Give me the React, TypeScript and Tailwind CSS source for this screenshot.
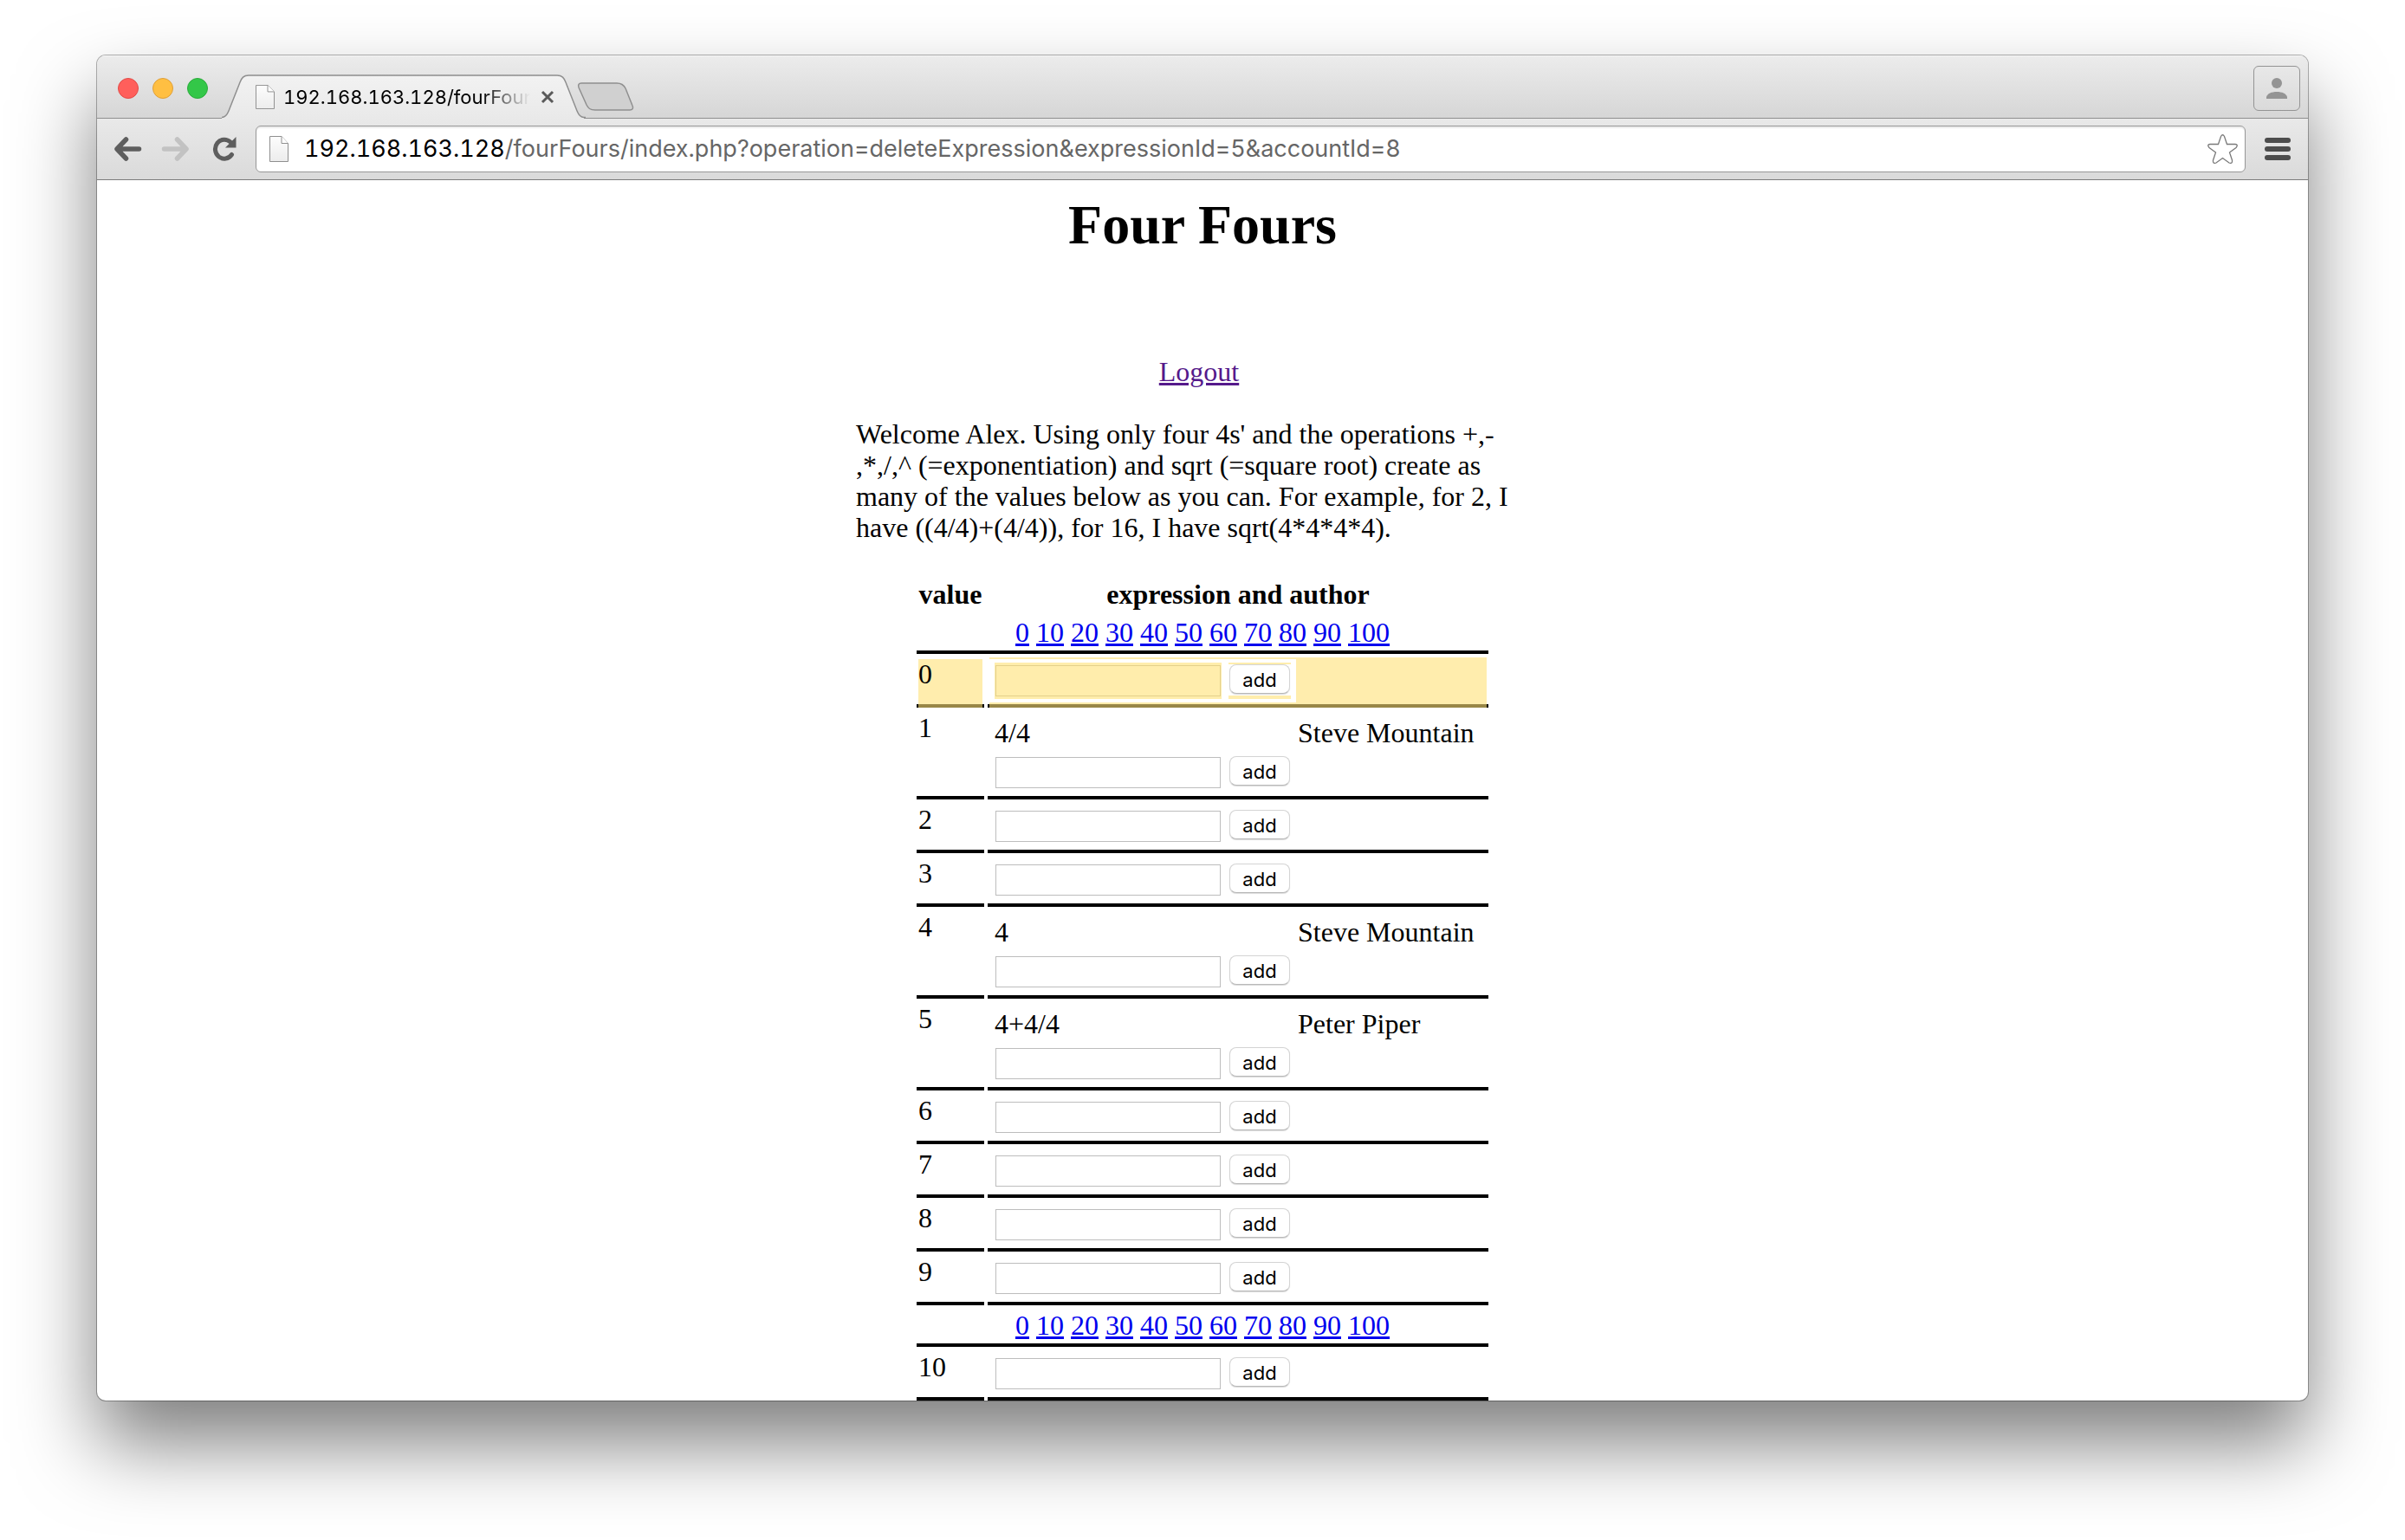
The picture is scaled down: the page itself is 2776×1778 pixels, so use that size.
import React from "react";

type Row = { value: number; expression?: string; author?: string; flash?: boolean };

const firstRows: Row[] = [
  { value: 0, flash: true },
  { value: 1, expression: "4/4", author: "Steve Mountain" },
  { value: 2 },
  { value: 3 },
  { value: 4, expression: "4", author: "Steve Mountain" },
  { value: 5, expression: "4+4/4", author: "Peter Piper" },
  { value: 6 },
  { value: 7 },
  { value: 8 },
  { value: 9 },
];
const nextRows: Row[] = [{ value: 10 }];
const jumps = [0, 10, 20, 30, 40, 50, 60, 70, 80, 90, 100];

function PageIcon({ className }: { className: string }) {
  return (
    <svg viewBox="0 0 22 30" preserveAspectRatio="none" className={className} aria-hidden="true">
      <defs>
        <linearGradient id="sheet" x1="0" y1="0" x2="0" y2="1">
          <stop offset="0" stopColor="#fdfdfd" />
          <stop offset="1" stopColor="#ececec" />
        </linearGradient>
      </defs>
      <path d="M.5.5H14L21.500 8.500V29.500H.5Z" fill="url(#sheet)" stroke="#8f8f8f" />
      <path d="M14 .5V8.500H21.500" fill="#fff" stroke="#8f8f8f" />
    </svg>
  );
}

function JumpRow() {
  return (
    <tr>
      <td colSpan={2} className="border-b-4 border-black px-[2px] pt-px pb-[3px] text-center">
        <nav className="flex justify-center gap-2">
          {jumps.map((n) => (
            <a key={n} href={`#v${n}`} className="text-[#0000ee] underline">
              {n}
            </a>
          ))}
        </nav>
      </td>
    </tr>
  );
}

function ValueRow({ value, expression, author, flash }: Row) {
  return (
    <tr id={`v${value}`}>
      <td className="relative border-b-4 border-black px-[2px] pt-px pb-[3px] align-top">
        {flash && <span className="absolute inset-x-[2px] top-[2px] -bottom-1 bg-[rgba(255,225,118,0.6)]" />}
        <span className="relative">{value}</span>
      </td>
      <td className="relative border-b-4 border-black p-[2px] align-top">
        {flash && <span className="absolute inset-x-[2px] top-0 -bottom-1 bg-[rgba(255,225,118,0.6)]" />}
        {expression && (
          <div className="flex pt-[5px] pb-[3px]">
            <span className="w-[356px] pl-[6px]">{expression}</span>
            <span>{author}</span>
          </div>
        )}
        <form
          onSubmit={(e) => e.preventDefault()}
          className="relative flex w-[354px] gap-2 bg-white px-[6px] py-1"
        >
          <span className={flash ? "flex bg-[#ffedac] px-px py-[3px]" : "flex px-px py-[3px]"}>
            <input
              type="text"
              aria-label={`Expression for ${value}`}
              className={
                flash
                  ? "h-9 w-[260px] border border-[#e3d08c] bg-transparent px-1 outline-none"
                  : "h-9 w-[260px] border border-[#bdbdbd] bg-white px-1 outline-none"
              }
            />
          </span>
          <span
            className={
              flash
                ? "h-[42px] border-t-2 border-b-4 border-[#ffedac] px-px"
                : "h-[42px] border-t-2 border-b-4 border-transparent px-px"
            }
          >
            <button
              type="submit"
              className="block h-[34px] w-[70px] rounded-[8px] border border-[#d4d4d4] border-b-[#b8b8b8] bg-white text-center font-['Inter',sans-serif] text-[22px] leading-[34px] shadow-[0_1px_1px_rgba(0,0,0,0.15)]"
            >
              add
            </button>
          </span>
        </form>
      </td>
    </tr>
  );
}

function TabStrip() {
  return (
    <div className="flex h-[73px] items-end border-b border-[#8f8f8f] bg-linear-to-b from-[#ececec] to-[#d6d6d6] shadow-[inset_0_1px_0_#f6f6f6]">
      <div className="flex h-full w-36 items-center gap-4 pt-1 pl-6">
        <button aria-label="Close window" className="size-6 rounded-full border border-[#e24b47] bg-[#ff5f5b]" />
        <button aria-label="Minimize window" className="size-6 rounded-full border border-[#df9f38] bg-[#ffbf42]" />
        <button aria-label="Zoom window" className="size-6 rounded-full border border-[#2bab3b] bg-[#33c748]" />
      </div>
      <div className="relative -mb-px flex h-[51px] w-[420px] items-center pl-[39px]">
        <svg viewBox="0 0 420 51" className="absolute inset-0 size-full" aria-hidden="true">
          <defs>
            <linearGradient id="tab" x1="0" y1="0" x2="0" y2="1">
              <stop offset="0" stopColor="#f2f2f2" />
              <stop offset="1" stopColor="#e9e9e9" />
            </linearGradient>
          </defs>
          <path
            d="M0 51V50C4 50 6 47 8 42L21 9C23 4 25 1.500 31 1.500H387C393 1.500 395 4 397 9L410 42C412 47 414 50 418 50V51Z"
            fill="url(#tab)"
          />
          <path
            d="M0 49.500C4 49.500 6 47 8 42L21 9C23 4 25 1 31 1H387C393 1 395 4 397 9L410 42C412 47 414 49.500 418 49.500H420"
            fill="none"
            stroke="#8f8f8f"
            strokeWidth="1.500"
          />
        </svg>
        <PageIcon className="relative h-7 w-[22px]" />
        <span className="relative ml-[10px] w-[285px] overflow-hidden whitespace-nowrap font-['Inter',sans-serif] text-[22px] leading-7 tabular-nums text-black [mask-image:linear-gradient(to_right,black_80%,transparent)]">
          192.168.163.128/fourFours
        </span>
        <button aria-label="Close tab" className="relative ml-3">
          <svg viewBox="0 0 16 16" className="size-4" aria-hidden="true">
            <path d="M2 2 14 14M14 2 2 14" stroke="#5a5a5a" strokeWidth="3" />
          </svg>
        </button>
      </div>
      <button aria-label="New tab" className="mb-2 -ml-[10px]">
        <svg viewBox="0 0 66 33" className="h-[33px] w-[66px]" aria-hidden="true">
          <path
            d="M5 1H46C51 1 54 3 56 7L64 27C65.500 30 64 32 61 32H21C15 32 13 30 11 26L2 6C1 3 2 1 5 1Z"
            fill="#d0d0d0"
            stroke="#8f8f8f"
            strokeWidth="1.500"
          />
        </svg>
      </button>
      <button
        aria-label="Profile"
        className="mr-[9px] mb-2 ml-auto flex h-[52px] w-[54px] items-center justify-center rounded-[6px] border border-[#949494] bg-linear-to-b from-[#e8e8e8] to-[#dadada]"
      >
        <svg viewBox="0 0 24 24" className="size-6" aria-hidden="true">
          <circle cx="12" cy="6" r="6" fill="#949494" />
          <path d="M0 24V22C1 18 6 16 12 16S23 18 24 22V24Z" fill="#949494" />
        </svg>
      </button>
    </div>
  );
}

function Toolbar() {
  return (
    <div className="flex h-[71px] items-center border-b border-[#7c7c7c] bg-linear-to-b from-[#e9e9e9] to-[#dadada] px-5">
      <button aria-label="Back">
        <svg viewBox="0 0 32 28" className="h-7 w-8" aria-hidden="true">
          <path
            d="M13.500 3 3 14 13.500 25M4 14H28.500"
            fill="none"
            stroke="#5e5e5e"
            strokeWidth="5.500"
            strokeLinecap="round"
            strokeLinejoin="round"
          />
        </svg>
      </button>
      <button aria-label="Forward" className="ml-[22px]">
        <svg viewBox="0 0 32 28" className="h-7 w-8" aria-hidden="true">
          <path
            d="M18.500 3 29 14 18.500 25M28 14H3.500"
            fill="none"
            stroke="#c2c2c2"
            strokeWidth="5.500"
            strokeLinecap="round"
            strokeLinejoin="round"
          />
        </svg>
      </button>
      <button aria-label="Reload" className="ml-[27px]">
        <svg viewBox="0 0 28 28" className="size-7" aria-hidden="true">
          <path
            d="M22.500 20.500A10.500 11 0 1 1 21 6"
            fill="none"
            stroke="#5e5e5e"
            strokeWidth="5"
            strokeLinecap="round"
          />
          <path d="M27.500 0V12.500H15Z" fill="#5e5e5e" />
        </svg>
      </button>
      <div className="ml-[22px] flex h-[54px] flex-1 items-center rounded-[6px] border border-[#979797] bg-white pr-2 pl-[15px] shadow-[inset_0_2px_1px_#ececec]">
        <PageIcon className="h-[30px] w-[22px]" />
        <div className="ml-[18px] flex-1 font-['Inter',sans-serif] text-[27px] leading-9 tabular-nums whitespace-nowrap text-[#666]">
          <span className="text-black">192.168.163.128</span>
          /fourFours/index.php?operation=deleteExpression&amp;expressionId=5&amp;accountId=8
        </div>
        <button aria-label="Bookmark">
          <svg viewBox="0 0 35 34" className="h-[34px] w-[35px]" aria-hidden="true">
            <path
              d="M15.500 2.500Q17.500-1 19.500 2.500L22.500 11.500L32 11.500Q36 12 33 15.500L25.500 21L28.500 30Q29 34.500 25 33L17.500 27.500L10 33Q6 34.500 6.500 30L9.500 21L2 15.500Q-1 12 3 11.500L12.500 11.500Z"
              fill="none"
              stroke="#7a7a7a"
              strokeWidth="1.300"
            />
          </svg>
        </button>
      </div>
      <button aria-label="Menu" className="ml-[22px] flex flex-col gap-1">
        <span className="h-[6px] w-[30px] rounded-full bg-[#4c4c4c]" />
        <span className="h-[6px] w-[30px] rounded-full bg-[#4c4c4c]" />
        <span className="h-[6px] w-[30px] rounded-full bg-[#4c4c4c]" />
      </button>
    </div>
  );
}

export default function App() {
  return (
    <div className="min-h-screen overflow-hidden bg-white px-28 pt-16 pb-36">
      <div className="overflow-hidden rounded-[10px] bg-white shadow-[0_0_0_1px_rgba(0,0,0,0.3),0_50px_90px_rgba(0,0,0,0.5)]">
        <TabStrip />
        <Toolbar />
        <main className="flex flex-col items-center pt-4 font-['Liberation_Serif',serif] text-[32px] leading-9 text-black">
          <h1 className="text-[64px] leading-[72px] font-bold">Four Fours</h1>
          <a href="#logout" className="mt-[115px] mr-2 text-[#551a8b] underline">
            Logout
          </a>
          <p className="mt-9 w-[800px] pr-9">
            Welcome Alex. Using only four 4s' and the operations +,-
            <wbr />
            ,*,/,^ (=exponentiation) and sqrt (=square root) create as many of the values below as you can. For
            example, for 2, I have ((4/4)+(4/4)), for 16, I have sqrt(4*4*4*4).
          </p>
          <table className="mt-9 -mb-1 w-[668px] table-fixed border-separate border-spacing-1">
            <colgroup>
              <col className="w-[78px]" />
              <col />
            </colgroup>
            <thead>
              <tr>
                <th className="px-[2px] pt-px pb-[3px] font-bold">value</th>
                <th className="px-[2px] pt-px pb-[3px] font-bold">expression and author</th>
              </tr>
            </thead>
            <tbody>
              <JumpRow />
              {firstRows.map((r) => (
                <ValueRow key={r.value} {...r} />
              ))}
              <JumpRow />
              {nextRows.map((r) => (
                <ValueRow key={r.value} {...r} />
              ))}
            </tbody>
          </table>
        </main>
      </div>
    </div>
  );
}
